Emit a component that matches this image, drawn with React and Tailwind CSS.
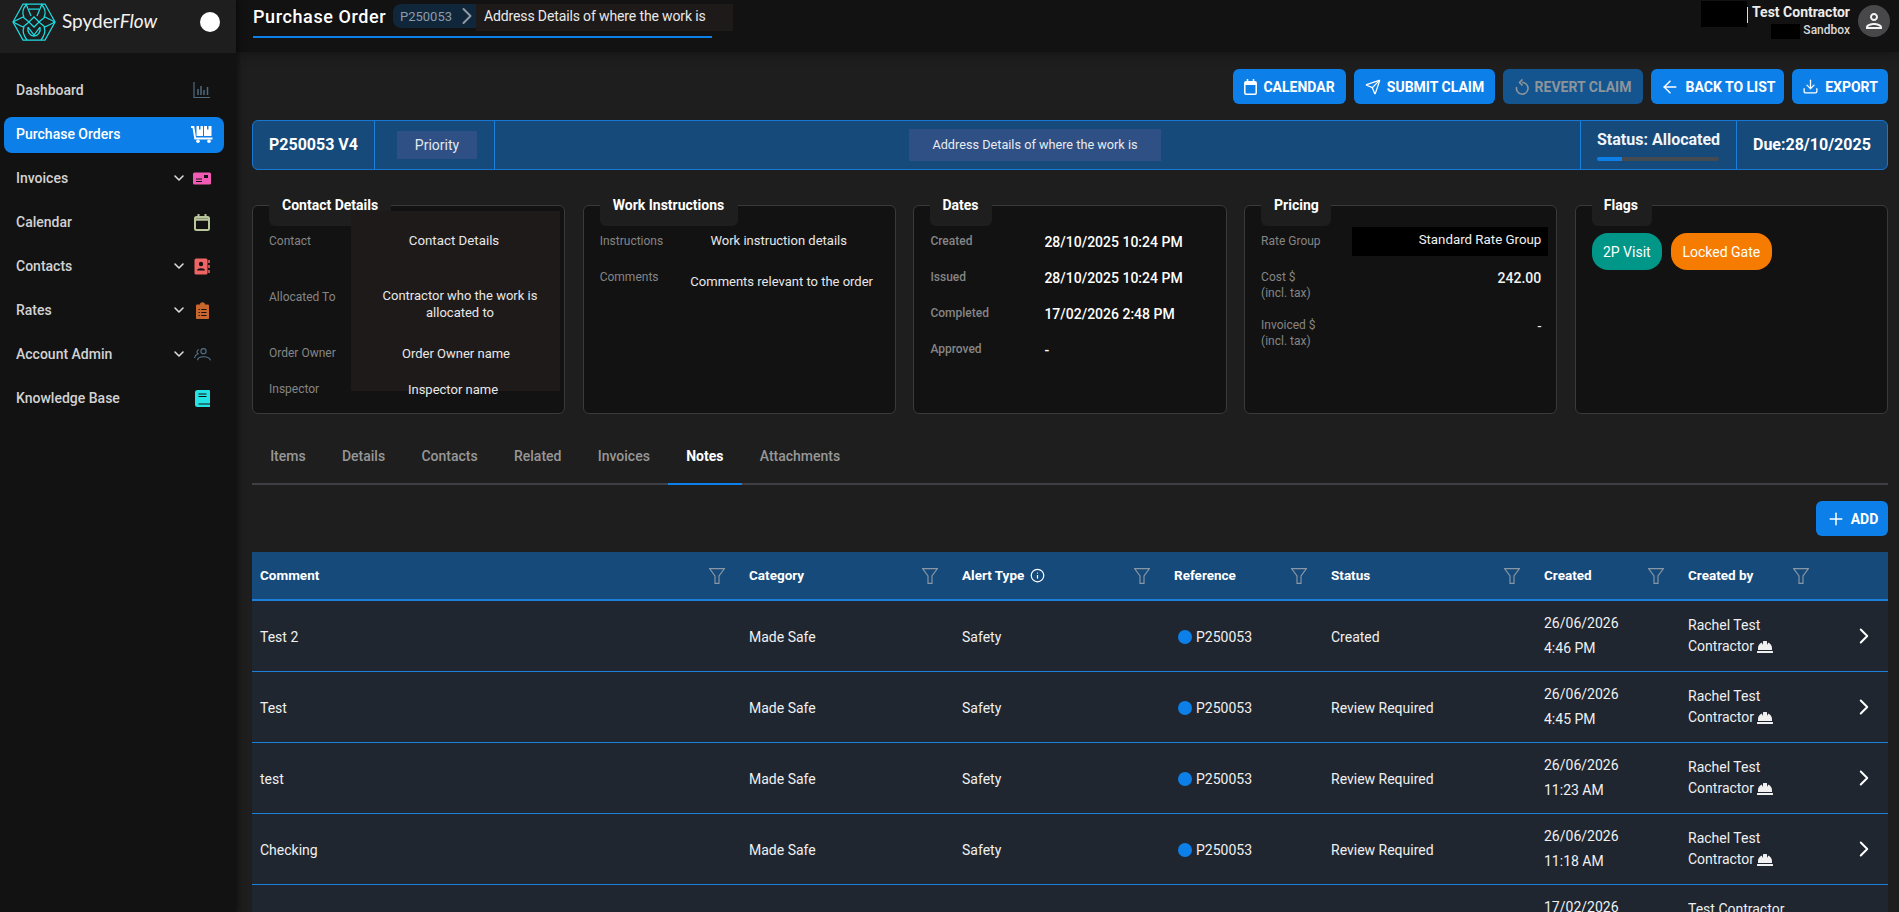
import React from 'react';
import { Send, ArrowLeft, Download, Plus, ChevronRight, ChevronDown, Info } from 'lucide-react';
import { FaHardHat } from 'react-icons/fa';
import { MdOutlinePerson } from 'react-icons/md';

const Logo = () => (
  <svg width="44" height="38" viewBox="0 0 44 38" fill="none" stroke="#1fdbe3" strokeWidth="1.25" className="shrink-0">
    <path d="M1 19 L11 1 H33 L43 19 L33 37 H11 Z" />
    <path d="M15 1 C10 6 10 10 12 14 M29 1 C34 6 34 10 32 14" />
    <path d="M14 1 L19 13 M30 1 L25 13 M17 6 H27" />
    <path d="M1 19 L11 14 L17 19 L22 14 L27 19 L33 14 L43 19" />
    <path d="M1 19 L11 24 L17 19 L22 24 L27 19 L33 24 L43 19" />
    <path d="M12 24 C10 28 12 33 15 37 M32 24 C34 28 32 33 29 37" />
    <path d="M16 24 L22 32 L28 24 M16 24 C15 29 18 33 22 33 C26 33 29 29 28 24" />
  </svg>
);

const IconChart = () => (
  <svg width="18" height="18" viewBox="0 0 18 18" fill="none" stroke="#4d6b80" strokeWidth="1.2">
    <path d="M1 1 V16.5 H17" />
    <path d="M5 8 V14 M8 5 V14 M11 9 V14 M14.5 6 V14" strokeWidth="1.5" />
  </svg>
);
const IconCart = () => (
  <svg width="22" height="18" viewBox="0 0 22 18" fill="#fff">
    <path d="M0 1 H3.2 L5 12.5 H21.5 V14.5 H3.4 L1.6 3 H0 Z" />
    <rect x="5.5" y="1" width="6.5" height="10" rx="0.6" />
    <rect x="13" y="1" width="7.5" height="10" rx="0.6" />
    <rect x="8" y="1" width="1.5" height="3.5" fill="#0d7fe8" />
    <rect x="16" y="1" width="1.5" height="3.5" fill="#0d7fe8" />
    <circle cx="7" cy="16.2" r="1.8" />
    <circle cx="18" cy="16.2" r="1.8" />
  </svg>
);
const IconInvoice = () => (
  <svg width="18" height="13" viewBox="0 0 18 13">
    <rect width="18" height="12" y="0.5" rx="1.5" fill="#f15bb5" />
    <path d="M3 7 H9 M3 9.5 H9" stroke="#121212" strokeWidth="1" />
    <rect x="11" y="3" width="4" height="3" fill="#121212" />
  </svg>
);
const IconCalendar = () => (
  <svg width="16" height="17" viewBox="0 0 16 17" fill="none" stroke="#b9c59b" strokeWidth="2">
    <rect x="1" y="3" width="14" height="13" rx="1.5" />
    <path d="M1 5.5 H15" strokeWidth="2.5" />
    <path d="M4.5 0 V3 M11.5 0 V3" />
  </svg>
);
const IconContacts = () => (
  <svg width="17" height="17" viewBox="0 0 17 17">
    <rect x="0.5" y="0.5" width="13" height="16" rx="1.5" fill="#ef6565" />
    <circle cx="7" cy="6" r="2.2" fill="#121212" />
    <path d="M3 12.5 C3 9.5 11 9.5 11 12.5 Z" fill="#121212" />
    <path d="M15 2 V5 M15 7 V10 M15 12 V15" stroke="#ef6565" strokeWidth="1.5" />
  </svg>
);
const IconRates = () => (
  <svg width="13" height="17" viewBox="0 0 13 17">
    <path d="M1.5 2.5 H4 C4 -0.5 9 -0.5 9 2.5 H11.5 A1.3 1.3 0 0 1 13 4 V15.5 A1.3 1.3 0 0 1 11.5 17 H1.5 A1.3 1.3 0 0 1 0 15.5 V4 A1.3 1.3 0 0 1 1.5 2.5 Z" fill="#c8662e" />
    <path d="M2.5 7.5 H3.8 M5.2 7.5 H10.5 M2.5 10.5 H3.8 M5.2 10.5 H10.5 M2.5 13.5 H3.8 M5.2 13.5 H10.5" stroke="#121212" strokeWidth="1" />
  </svg>
);
const IconUsers = () => (
  <svg width="17" height="13" viewBox="0 0 17 13" fill="none" stroke="#55728a" strokeWidth="1.1">
    <circle cx="9.5" cy="3.2" r="2.6" />
    <path d="M3.5 12.3 C3.8 7.5 15 7.5 16.5 12.3" />
    <path d="M5 1.8 C3 2 2.3 4.5 4 5.8 C2 6.5 0.8 8 0.5 10" />
  </svg>
);
const IconBook = () => (
  <svg width="15" height="17" viewBox="0 0 15 17">
    <path d="M2.5 0 H14 A1 1 0 0 1 15 1 V17 H2.5 A2.5 2.5 0 0 1 0 14.5 V2.5 A2.5 2.5 0 0 1 2.5 0 Z" fill="#25e2e4" />
    <path d="M3.5 4 H11.5 M3.5 6.5 H11.5 M3.5 14 H15" stroke="#121212" strokeWidth="1" />
  </svg>
);
const IconCalFilled = () => (
  <svg width="13" height="16" viewBox="0 0 13 16" fill="none" stroke="#fff" strokeWidth="1.5">
    <rect x="0.8" y="2.8" width="11.4" height="12.4" rx="1.2" />
    <path d="M1 4.5 H12" strokeWidth="3" />
    <path d="M3.5 0 V3 M9.5 0 V3" />
  </svg>
);
const IconRevert = () => (
  <svg width="14" height="16" viewBox="0 0 14 16" fill="none" stroke="currentColor" strokeWidth="1.6">
    <path d="M7 3.5 A5.8 5.8 0 1 1 1.6 8" />
    <path d="M7.5 0.5 L4.5 3.5 L7.5 6.5" />
  </svg>
);
const Funnel = () => (
  <svg width="16" height="16" viewBox="0 0 16 16" fill="none" stroke="#8a96a3" strokeWidth="1.15" className="shrink-0">
    <path d="M0.6 0.6 H15.4 L10 8 V15.4 H6 V8 Z" />
  </svg>
);

const nav = [
  ['Dashboard', false, <IconChart />],
  ['Purchase Orders', false, <IconCart />],
  ['Invoices', true, <IconInvoice />],
  ['Calendar', false, <IconCalendar />],
  ['Contacts', true, <IconContacts />],
  ['Rates', true, <IconRates />],
  ['Account Admin', true, <IconUsers />],
  ['Knowledge Base', false, <IconBook />],
];

function Sidebar() {
  return (
    <aside className="w-[236px] shrink-0 bg-[#121212] flex flex-col shadow-[2px_0_6px_rgba(0,0,0,0.5)] z-10">
      <div className="h-[53px] bg-[#1e1e1e] flex items-center pl-3 pb-[11px] pt-[1px] pr-4">
        <Logo />
        <span className="ml-[6px] text-[19px] text-[#f2f2f2] font-normal [font-family:Lato,sans-serif]">Spyder<i>Flow</i></span>
        <span className="ml-auto mr-0 w-5 h-5 rounded-full bg-white" />
      </div>
      <nav className="mt-5 flex flex-col gap-2 px-1 pr-3">
        {nav.map(([label, chev, icon]) => {
          const active = label === 'Purchase Orders';
          return (
            <div key={label} className={`h-9 flex items-center pl-3 pb-[2px] rounded-lg text-sm font-medium ${active ? 'bg-[#0d7fe8] text-white' : 'text-[#d2d2d2]'}`}>
              <span>{label}</span>
              {chev && <ChevronDown size={16} strokeWidth={2.4} className="ml-auto text-[#dcdcdc]" />}
              <span className={`w-[22px] flex justify-center mr-[11px] ${chev ? 'ml-[4px]' : 'ml-auto'}`}>{icon}</span>
            </div>
          );
        })}
      </nav>
    </aside>
  );
}

function TopBar() {
  return (
    <header className="h-[52px] shrink-0 bg-[#121212] shadow-[0_4px_10px_rgba(0,0,0,0.25)] flex items-start justify-between pl-[17px] pr-[9px] relative">
      <div className="relative w-[459px] h-[37.5px] border-b-2 border-[#0d7fe8] flex items-center pb-[2px]">
        <span className="w-[140px] shrink-0 text-lg tracking-[0.6px] font-medium text-white whitespace-nowrap">Purchase Order</span>
        <div className="h-6 w-[84px] bg-[#10263a] rounded-l-lg flex items-center pl-[7px] text-[13px] text-[#8d9aa8] mt-[-1px]">
          P250053
          <ChevronRight size={28} strokeWidth={1.7} className="shrink-0 ml-[1px] text-[#8d9aa8]" />
        </div>
        <div className="absolute left-[223px] top-1 w-[257px] h-[27px] bg-[#1e1a1a] flex items-center pl-2 pb-[4px] text-sm tracking-[-0.13px] text-[#e9e9e9]">
          Address Details of where the work is
        </div>
      </div>
      <div className="flex items-start mt-[1px]">
        <div className="flex flex-col items-end">
          <div className="flex items-start h-[26px]">
            <span className="w-[46px] h-[26px] bg-black" />
            <span className="w-px h-[16px] bg-[#ddd] mt-[6px] mr-[4px]" />
            <span className="text-sm font-bold text-[#ececec] mt-[1px]">Test Contractor</span>
          </div>
          <div className="flex items-start h-[15px] mt-[-3px]">
            <span className="w-[29px] h-[15px] bg-black mr-[3px]" />
            <span className="text-xs font-medium text-[#d8d8d8] mt-[-2px]">Sandbox</span>
          </div>
        </div>
        <div className="ml-2 mt-[4px] w-8 h-8 rounded-full bg-[#48484a] flex items-center justify-center">
          <MdOutlinePerson size={24} color="#f2f2f2" />
        </div>
      </div>
    </header>
  );
}

const Btn = ({ icon, children, cls = '' }) => (
  <button className={`h-[35px] rounded-md bg-[#0d7fe8] text-white text-sm font-bold uppercase flex items-center justify-center gap-[6px] whitespace-nowrap ${cls}`}>
    {icon}
    {children}
  </button>
);

function Actions() {
  return (
    <div className="mt-[17px] flex justify-end gap-2">
      <Btn cls="w-[113px]" icon={<IconCalFilled />}>Calendar</Btn>
      <Btn cls="w-[141px]" icon={<Send size={16} strokeWidth={1.8} />}>Submit Claim</Btn>
      <Btn cls="w-[140px] !bg-[#14558f] !text-[#8c949c]" icon={<IconRevert />}>Revert Claim</Btn>
      <Btn cls="w-[133px]" icon={<ArrowLeft size={20} strokeWidth={1.8} />}>Back to List</Btn>
      <Btn cls="w-[96px]" icon={<Download size={17} strokeWidth={1.8} />}>Export</Btn>
    </div>
  );
}

function StatusBar() {
  return (
    <div className="mt-4 h-[50px] bg-[#164a7a] border border-[#1976d2] rounded-md flex items-stretch text-white">
      <div className="w-[122px] border-r border-[#1b7fdc] flex items-center pl-[16px] text-base font-bold">P250053 V4</div>
      <div className="w-[120px] border-r border-[#1b7fdc] flex items-center pl-[22px]">
        <span className="w-20 h-7 bg-[#2f5085] text-sm text-[#e4e8ee] flex items-center justify-center">Priority</span>
      </div>
      <div className="flex-1 flex items-center pl-[414px]">
        <span className="w-[252px] h-8 bg-[#2f5085] text-[12.7px] text-[#e8ebf0] flex items-center justify-center">Address Details of where the work is</span>
      </div>
      <div className="w-[156px] border-l border-[#1b7fdc] pl-[16px] pt-[11px]">
        <div className="text-base font-bold leading-4 text-[#f0f4f8] whitespace-nowrap">Status: Allocated</div>
        <div className="mt-[9px] w-[122px] h-1 rounded-sm bg-[#444a50]"><div className="w-[25px] h-1 rounded-l-sm bg-[#0d7fe8]" /></div>
      </div>
      <div className="w-[151px] border-l border-[#1b7fdc] flex items-center pl-[16px] text-base font-bold whitespace-nowrap">Due:28/10/2025</div>
    </div>
  );
}

const Card = ({ title, tabW, pad, children }) => (
  <section className="relative h-[209px] bg-[#121212] border border-[#3a3a3a] rounded-md pt-[25px] pl-[16px] pr-[15px]">
    <div className={`absolute left-[16px] top-[-9px] h-[29px] bg-[#1e1e1e] rounded-b-md text-sm font-bold text-white flex items-center leading-none ${tabW} ${pad}`}>
      <span className="mt-[-14px]">{title}</span>
    </div>
    {children}
  </section>
);

const Label = ({ children, w = 'w-[82px]' }) => <div className={`${w} shrink-0 text-xs leading-5 text-[#858585]`}>{children}</div>;

function Cards() {
  return (
    <div className="mt-[35px] grid grid-cols-5 gap-[17.5px]">
      <Card title="Contact Details" tabW="w-[122px]" pad="pl-[13px]">
        <div className="absolute left-[98px] top-[5px] w-[209px] h-[180px] bg-[#1e1a1a]" />
        <div className="relative flex flex-col text-[13px] text-[#e8e8e8]">
          <div className="h-14 flex"><Label>Contact</Label><div className="w-[206px] shrink-0 text-center leading-5 text-[13.3px]">Contact Details</div></div>
          <div className="h-14 flex"><Label>Allocated To</Label><div className="w-[206px] shrink-0 pl-3 text-center leading-[16.5px] mt-[1px]">Contractor who the work is allocated to</div></div>
          <div className="h-9 flex"><Label>Order Owner</Label><div className="w-[206px] shrink-0 pl-1 text-center leading-5 mt-[1px]">Order Owner name</div></div>
          <div className="h-9 flex"><Label>Inspector</Label><div className="w-[206px] shrink-0 pr-[2px] text-center leading-5 mt-[1px]">Inspector name</div></div>
        </div>
      </Card>
      <Card title="Work Instructions" tabW="w-[138px]" pad="pl-[13px]">
        <div className="flex flex-col text-[13px] text-[#e8e8e8]">
          <div className="h-9 flex"><Label w="w-[80px]">Instructions</Label><div className="w-[198px] text-center leading-5">Work instruction details</div></div>
          <div className="h-9 flex"><Label w="w-[80px]">Comments</Label><div className="w-[198px] pl-[6px] text-center leading-5 mt-[5px] whitespace-nowrap">Comments relevant to the order</div></div>
        </div>
      </Card>
      <Card title="Dates" tabW="w-[62px]" pad="pl-3">
        <div className="flex flex-col text-sm font-medium text-white">
          {[['Created', '28/10/2025 10:24 PM'], ['Issued', '28/10/2025 10:24 PM'], ['Completed', '17/02/2026 2:48 PM'], ['Approved', '-']].map(([l, v]) => (
            <div key={l} className="h-9 flex"><Label w="w-[114px]">{l}</Label><div className="leading-5 mt-[1px]">{v}</div></div>
          ))}
        </div>
      </Card>
      <Card title="Pricing" tabW="w-[70px]" pad="pl-[13px]">
        <div className="absolute left-[107px] top-[21px] w-[196px] h-[29px] bg-black" />
        <div className="relative flex flex-col text-[#f2f2f2]">
          <div className="h-9 flex justify-between"><Label>Rate Group</Label><div className="text-[13.3px] leading-5 mt-[-1px]">Standard Rate Group</div></div>
          <div className="h-12 flex justify-between"><div className="text-xs leading-4 text-[#858585] mt-[2px]">Cost $<br />(incl. tax)</div><div className="text-sm font-medium leading-5 mt-[1px]">242.00</div></div>
          <div className="h-12 flex justify-between"><div className="text-xs leading-4 text-[#858585] mt-[2px]">Invoiced $<br />(incl. tax)</div><div className="text-sm leading-5 mt-[1px]">-</div></div>
        </div>
      </Card>
      <Card title="Flags" tabW="w-[60px]" pad="pl-3">
        <div className="flex gap-[9px] mt-[2px] text-sm text-white">
          <span className="w-[70px] h-[37px] rounded-[16px] bg-[#009688] flex items-center justify-center">2P Visit</span>
          <span className="w-[101px] h-[37px] rounded-[16px] bg-[#f57c00] flex items-center justify-center">Locked Gate</span>
        </div>
      </Card>
    </div>
  );
}

function Tabs() {
  const tabs = ['Items', 'Details', 'Contacts', 'Related', 'Invoices', 'Notes', 'Attachments'];
  return (
    <div className="h-[71px] border-b-2 border-[#3f3f46] flex items-end">
      {tabs.map((t) => (
        <div key={t} className={`h-[48px] mb-[-2px] px-[18.15px] flex items-center pb-[8px] text-sm border-b-2 ${t === 'Notes' ? 'text-white font-bold border-[#0d7fe8]' : 'text-[#979797] font-medium border-transparent'}`}>{t}</div>
      ))}
    </div>
  );
}

const GRID = 'grid grid-cols-[489px_213px_212px_157px_213px_144px_145px_1fr]';
const heads = ['Comment', 'Category', 'Alert Type', 'Reference', 'Status', 'Created', 'Created by'];

const rows = [
  ['Test 2', 'Made Safe', 'Safety', 'P250053', 'Created', '26/06/2026', '4:46 PM', 'Rachel Test', 'Contractor'],
  ['Test', 'Made Safe', 'Safety', 'P250053', 'Review Required', '26/06/2026', '4:45 PM', 'Rachel Test', 'Contractor'],
  ['test', 'Made Safe', 'Safety', 'P250053', 'Review Required', '26/06/2026', '11:23 AM', 'Rachel Test', 'Contractor'],
  ['Checking', 'Made Safe', 'Safety', 'P250053', 'Review Required', '26/06/2026', '11:18 AM', 'Rachel Test', 'Contractor'],
  ['', '', '', '', '', '17/02/2026', '', 'Test Contractor', ''],
];

function Table() {
  return (
    <div className="mt-4 text-sm">
      <div className={`${GRID} h-[49px] bg-[#164a7a] border-b-2 border-[#1b7fdc] text-[13.5px] font-bold text-white`}>
        {heads.map((h) => (
          <div key={h} className="flex items-center justify-between pl-2 pr-4">
            <span className="flex items-center gap-[6px]">{h}{h === 'Alert Type' && <Info size={15} strokeWidth={2} />}</span>
            <Funnel />
          </div>
        ))}
        <div />
      </div>
      {rows.map((r, i) => (
        <div key={i} className={`${GRID} h-[71px] bg-[#1f2630] border-b border-[#1b7fdc] text-sm text-[#f0f0f0]`}>
          <div className="pl-2 pt-[1px] flex items-center">{r[0]}</div>
          <div className="pl-2 pt-[1px] flex items-center">{r[1]}</div>
          <div className="pl-2 pt-[1px] flex items-center">{r[2]}</div>
          <div className="pl-3 pt-[1px] flex items-center gap-[4px]">
            {r[3] && <span className="w-[14px] h-[14px] rounded-full bg-[#0d7fe8]" />}{r[3]}
          </div>
          <div className="pl-2 pt-[1px] flex items-center">{r[4]}</div>
          <div className="pl-2 flex flex-col justify-center leading-[25px]"><span>{r[5]}</span><span>{r[6] || '\u00a0'}</span></div>
          <div className="pl-2 flex flex-col justify-center leading-[21px]">
            <span>{r[7]}</span>
            {r[8] ? <span className="flex items-center gap-[3px]">{r[8]}<FaHardHat size={16} color="#f0f0f0" /></span> : <span>{'\u00a0'}</span>}
          </div>
          <div className="flex items-center pl-[26px]">{r[0] && <ChevronRight size={26} strokeWidth={1.8} className="text-white" />}</div>
        </div>
      ))}
    </div>
  );
}

export default function App() {
  return (
    <div className="h-[912px] w-[1899px] overflow-hidden flex bg-[#1e1e1e] text-white [font-family:Roboto,sans-serif]">
      <Sidebar />
      <main className="flex-1 min-w-0 flex flex-col">
        <TopBar />
        <div className="pl-4 pr-[11px]">
          <Actions />
          <StatusBar />
          <Cards />
          <Tabs />
          <div className="mt-4 flex justify-end">
            <button className="w-[72px] h-[35px] rounded-md bg-[#0d7fe8] text-sm font-bold flex items-center justify-center gap-[5px]">
              <Plus size={20} strokeWidth={1.8} />ADD
            </button>
          </div>
          <Table />
        </div>
      </main>
    </div>
  );
}
